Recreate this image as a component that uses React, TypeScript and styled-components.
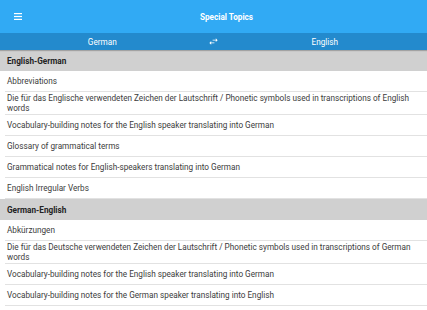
import React from 'react';
import styled, { createGlobalStyle } from 'styled-components';

const GlobalStyle = createGlobalStyle`
  html, body {
    margin: 0;
    padding: 0;
    background: #fff;
  }
  body {
    font-family: Roboto, "Liberation Sans", Arial, sans-serif;
  }
`;

const Page = styled.div`
  width: 427px;
  display: flex;
  flex-direction: column;
`;

const Toolbar = styled.header`
  height: 33px;
  background: #31aaf4;
  display: grid;
  grid-template-columns: 36px 1fr 10px;
  align-items: center;
  color: #fff;
`;

const MenuButton = styled.div`
  display: flex;
  align-items: center;
  justify-content: flex-start;
  padding-left: 14px;
`;

const Title = styled.div`
  text-align: center;
  font-size: 8.2px;
  font-weight: 700;
`;

const LangBar = styled.div`
  height: 17px;
  background: #238acd;
  display: grid;
  grid-template-columns: 1fr 18px 1fr;
  align-items: center;
  color: #fff;
  font-size: 8.2px;
  box-shadow: 0 1px 1px rgba(0, 0, 0, 0.22);
  position: relative;
  z-index: 1;
`;

const Lang = styled.div`
  text-align: center;
`;

const SwapIcon = styled.div`
  display: flex;
  justify-content: center;
  align-items: center;
`;

const SectionHeader = styled.div`
  height: 21px;
  background: #d0d0d0;
  display: flex;
  align-items: center;
  padding-left: 7px;
  font-size: 8.2px;
  font-weight: 700;
  color: #222;
`;

const Item = styled.div`
  min-height: 19px;
  padding: 1px 12px 1px 7px;
  display: flex;
  align-items: center;
  font-size: 8.2px;
  line-height: 10px;
  color: #3c3c3c;
  position: relative;
  &:after {
    content: '';
    position: absolute;
    left: 5px;
    right: 0;
    bottom: 0;
    height: 1px;
    background: #e2e2e2;
  }
  & > span {
    padding-bottom: 1px;
  }
`;

const sections = [
  {
    title: 'English-German',
    items: [
      'Abbreviations',
      'Die für das Englische verwendeten Zeichen der Lautschrift / Phonetic symbols used in transcriptions of English words',
      'Vocabulary-building notes for the English speaker translating into German',
      'Glossary of grammatical terms',
      'Grammatical notes for English-speakers translating into German',
      'English Irregular Verbs',
    ],
  },
  {
    title: 'German-English',
    items: [
      'Abkürzungen',
      'Die für das Deutsche verwendeten Zeichen der Lautschrift / Phonetic symbols used in transcriptions of German words',
      'Vocabulary-building notes for the English speaker translating into German',
      'Vocabulary-building notes for the German speaker translating into English',
    ],
  },
];

const App = () => {
  return (
    <>
      <GlobalStyle />
      <Page>
        <Toolbar>
          <MenuButton>
            <svg width="8" height="7" viewBox="0 0 8 7">
              <rect x="0" y="0" width="8" height="1.2" fill="#fff" />
              <rect x="0" y="2.9" width="8" height="1.2" fill="#fff" />
              <rect x="0" y="5.8" width="8" height="1.2" fill="#fff" />
            </svg>
          </MenuButton>
          <Title>Special Topics</Title>
          <div />
        </Toolbar>
        <LangBar>
          <Lang>German</Lang>
          <SwapIcon>
            <svg width="11" height="11" viewBox="0 0 24 24">
              <path
                fill="#fff"
                d="M6.99 11L3 15l3.99 4v-3H14v-2H6.99v-3zM21 9l-3.99-4v3H10v2h7.01v3L21 9z"
              />
            </svg>
          </SwapIcon>
          <Lang>English</Lang>
        </LangBar>
        {sections.map((s) => (
          <React.Fragment key={s.title}>
            <SectionHeader>{s.title}</SectionHeader>
            {s.items.map((t, i) => (
              <Item key={i}>
                <span>{t}</span>
              </Item>
            ))}
          </React.Fragment>
        ))}
      </Page>
    </>
  );
};

export default App;
